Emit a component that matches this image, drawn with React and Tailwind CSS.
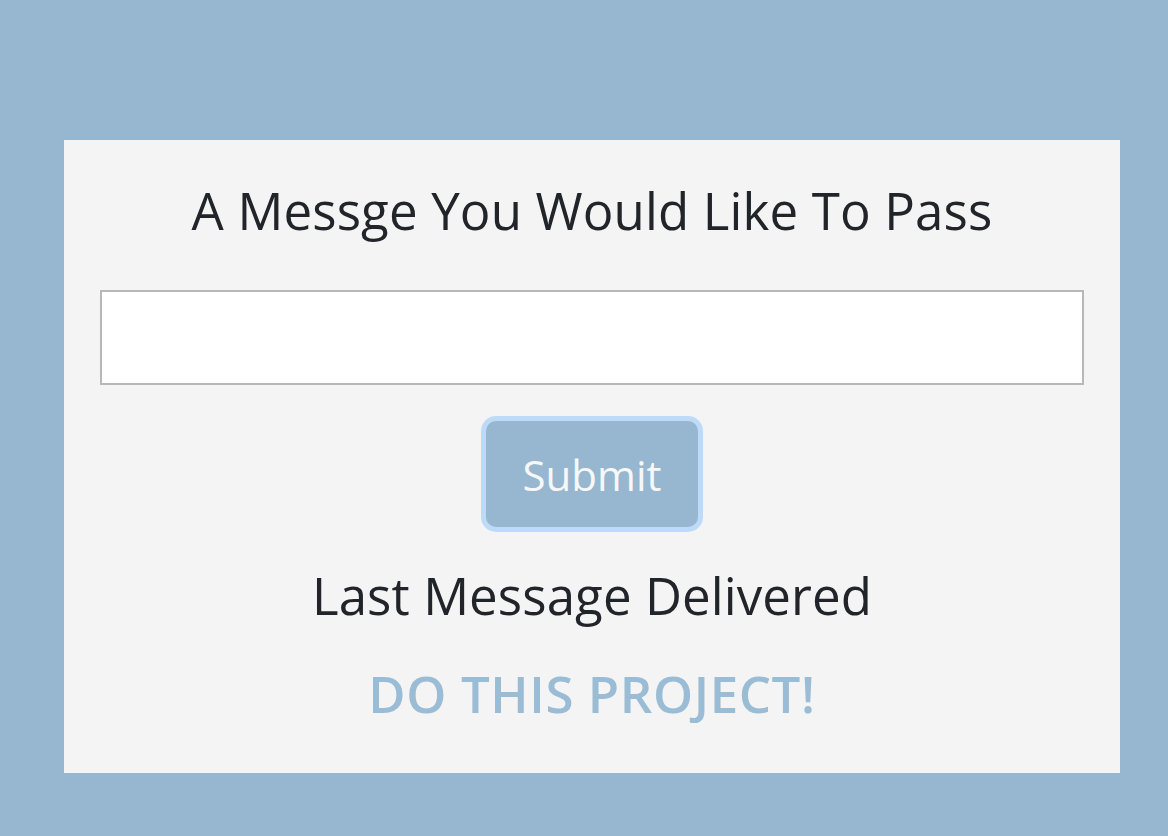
import React from "react";

export default function App() {
  return (
    <div className="min-h-[836px] w-full bg-[#96b7cf] pt-[140px] pl-[64px] font-['Open_Sans','Noto_Sans',sans-serif]">
      <div className="w-[1056px] h-[633px] bg-[#f4f4f4] px-[36px] pt-[42px] flex flex-col items-center">
        <h1 className="text-[51px] leading-[56px] tracking-[0.15px] text-[#212529]">
          A Messge You Would Like To Pass
        </h1>
        <input
          type="text"
          className="mt-[52px] w-full h-[95px] bg-white border-2 border-[#b8b8b8] outline-none"
        />
        <button className="mt-[36px] w-[212px] h-[106px] rounded-[10px] bg-[#96b7cf] text-[#f7f7f7] text-[42px] ring-[5px] ring-[#bddbf8]">
          Submit
        </button>
        <h2 className="mt-[38px] text-[51px] leading-[60px] tracking-[0.1px] text-[#212529]">
          Last Message Delivered
        </h2>
        <p className="mt-[38px] text-[51px] leading-[60px] tracking-[0.6px] font-semibold text-[#9abcd5]">
          DO THIS PROJECT!
        </p>
      </div>
    </div>
  );
}
